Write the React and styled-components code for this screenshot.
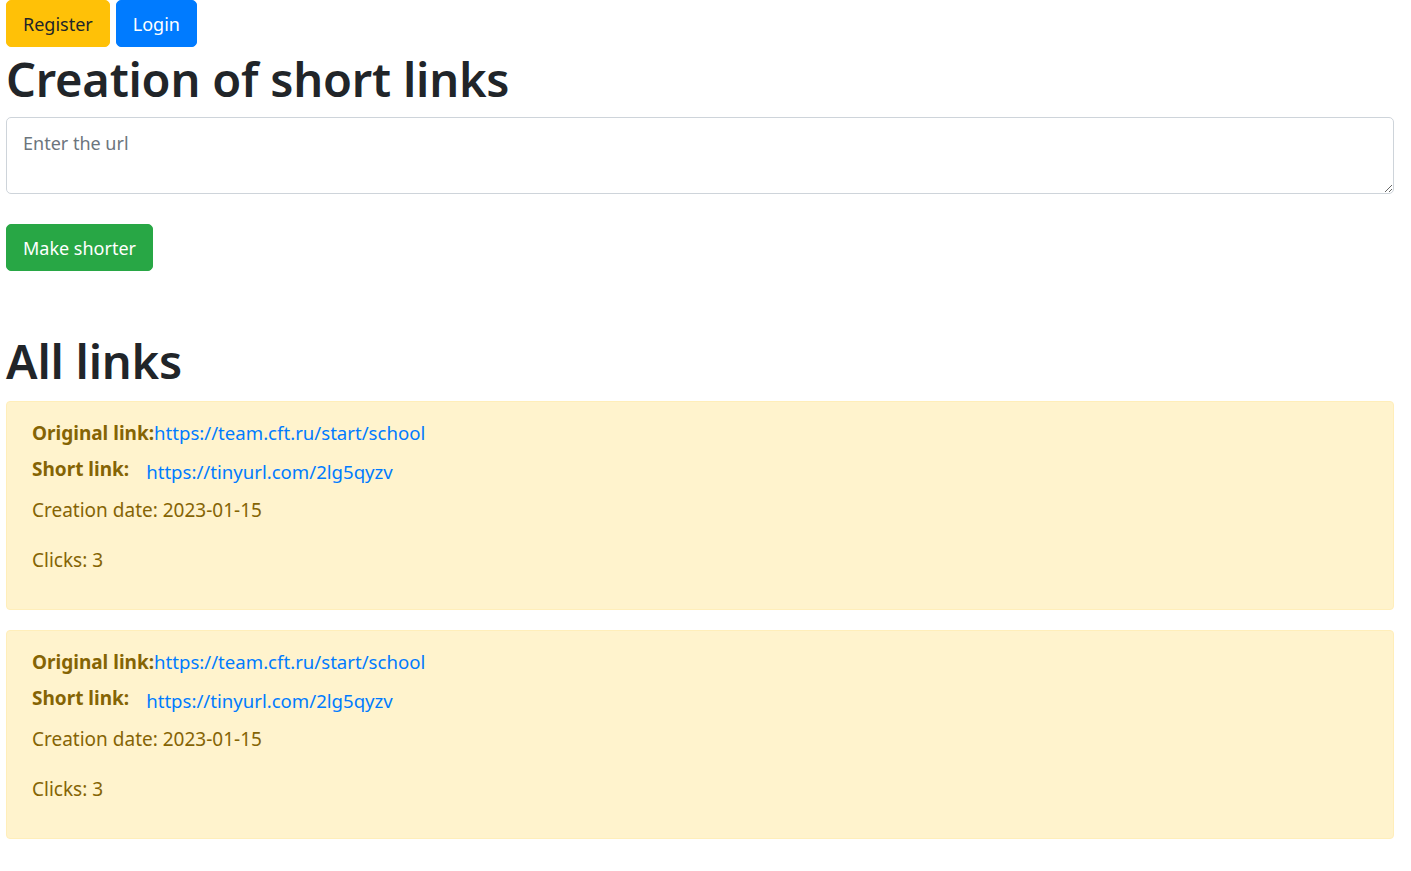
import styled, { createGlobalStyle } from 'styled-components';

const LINKS = [
  {
    id: 1,
    original: 'https://team.cft.ru/start/school',
    short: 'https://tinyurl.com/2lg5qyzv',
    date: '2023-01-15',
    clicks: 3,
  },
  {
    id: 2,
    original: 'https://team.cft.ru/start/school',
    short: 'https://tinyurl.com/2lg5qyzv',
    date: '2023-01-15',
    clicks: 3,
  },
];

const GlobalStyle = createGlobalStyle`
  * { box-sizing: border-box; }
  body {
    margin: 0;
    background: #fff;
    color: #212529;
    font-family: "Noto Sans", "Open Sans", sans-serif;
  }
`;

const Page = styled.div`
  width: 1388px;
  margin-left: 6px;
  display: flex;
  flex-direction: column;
`;

const Nav = styled.div`
  display: flex;
  gap: 6px;
`;

const Button = styled.button`
  height: 47px;
  padding: 0 16px;
  border: 1px solid ${(p) => p.$bg};
  border-radius: 5px;
  background: ${(p) => p.$bg};
  color: ${(p) => p.$fg};
  font-family: inherit;
  font-size: 18px;
  line-height: 1;
  cursor: pointer;
`;

const Title = styled.h1`
  margin: 0 0 5px;
  font-size: 47px;
  font-weight: 600;
  line-height: 65px;
  color: #212529;
  letter-spacing: -0.2px;
`;

const UrlInput = styled.textarea`
  display: block;
  width: 100%;
  height: 77px;
  padding: 10px 16px;
  border: 1px solid #ced4da;
  border-radius: 5px;
  font-family: inherit;
  font-size: 18px;
  line-height: 30px;
  color: #495057;
  resize: vertical;

  &::placeholder {
    color: #6c757d;
  }
`;

const SubmitRow = styled.div`
  margin-top: 30px;
`;

const LinksTitle = styled(Title)`
  margin: 58px 0 7px;
`;

const Card = styled.div`
  height: 209px;
  margin-bottom: 20px;
  padding: 16px 25px 0;
  background: #fff3cd;
  border: 1px solid #ffeeba;
  border-radius: 4px;
  color: #856404;
  font-size: 19px;
  line-height: 30px;
`;

const Row = styled.div`
  display: flex;
  align-items: flex-start;
  margin-bottom: ${(p) => p.$gap || 0}px;
`;

const Label = styled.b`
  font-weight: 700;
`;

const Link = styled.a`
  color: #007bff;
  text-decoration: none;
  font-size: 18.6px;
  padding-left: ${(p) => p.$indent || 0}px;
  padding-top: ${(p) => p.$drop || 0}px;
`;

export default function App() {
  return (
    <>
      <GlobalStyle />
      <Page>
        <Nav>
          <Button $bg="#ffc107" $fg="#212529">Register</Button>
          <Button $bg="#007bff" $fg="#fff">Login</Button>
        </Nav>
        <Title>Creation of short links</Title>
        <UrlInput rows={2} placeholder="Enter the url" />
        <SubmitRow>
          <Button $bg="#28a745" $fg="#fff">Make shorter</Button>
        </SubmitRow>
        <LinksTitle>All links</LinksTitle>
        {LINKS.map((link) => (
          <Card key={link.id}>
            <Row $gap={6}>
              <Label>Original link:</Label>
              <Link href="#">{link.original}</Link>
            </Row>
            <Row $gap={8}>
              <Label>Short link:</Label>
              <Link href="#" $indent={17} $drop={3}>{link.short}</Link>
            </Row>
            <Row $gap={20}>Creation date: {link.date}</Row>
            <Row>Clicks: {link.clicks}</Row>
          </Card>
        ))}
      </Page>
    </>
  );
}
